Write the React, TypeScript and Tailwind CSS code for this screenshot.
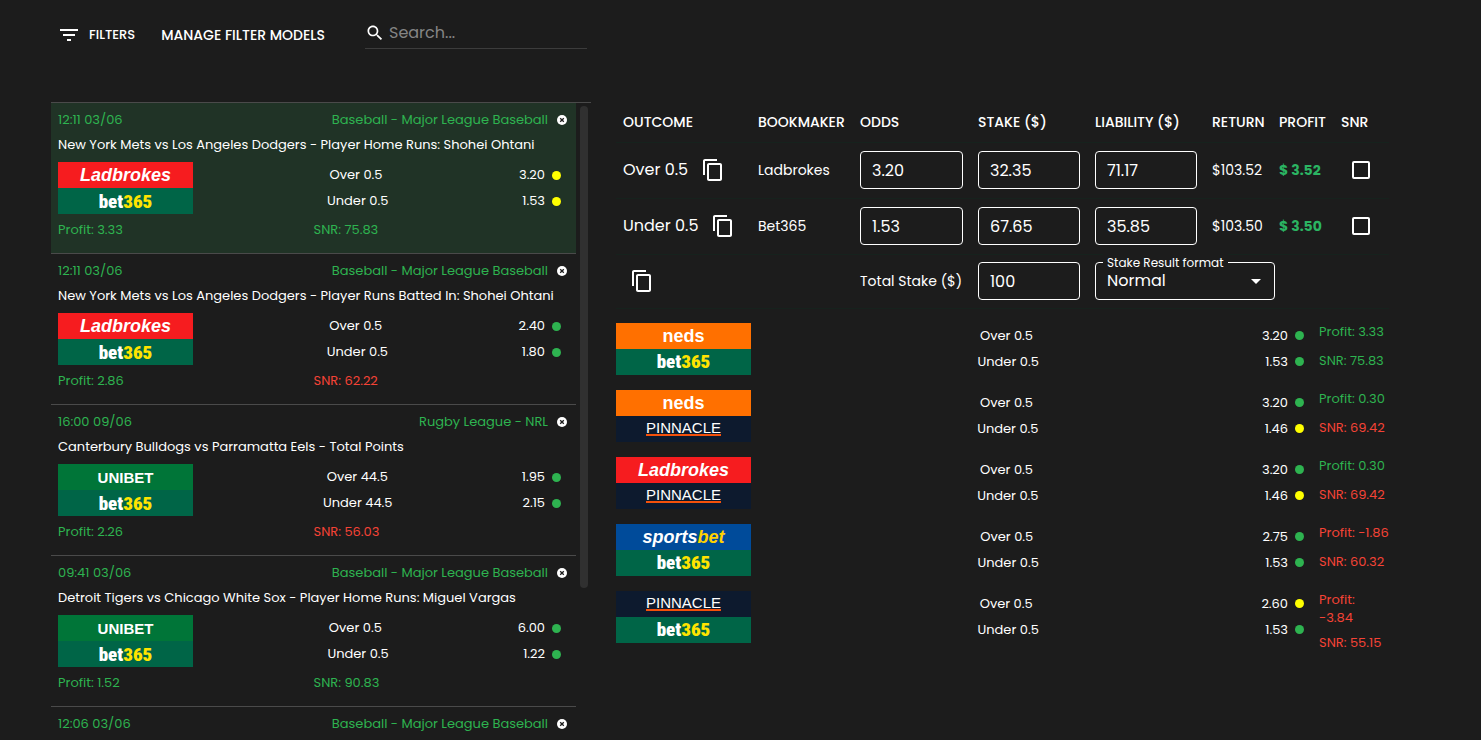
import { useState } from "react";

type Brand = "ladbrokes" | "bet365" | "unibet" | "neds" | "pinnacle" | "sportsbet";
type DotColor = "green" | "yellow";
type Leg = { brand: Brand; outcome: string; odds: string; dot: DotColor };
type Match = {
	date: string;
	league: string;
	title: string;
	legs: Leg[];
	profit: string;
	snr: string;
	snrUp: boolean;
};
type Combo = {
	legs: Leg[];
	profit: string;
	profitUp: boolean;
	snr: string;
	snrUp: boolean;
};

const leg = (brand: Brand, outcome: string, odds: string, dot: DotColor): Leg => ({
	brand,
	outcome,
	odds,
	dot,
});

const matches: Match[] = [
	{
		date: "12:11 03/06",
		league: "Baseball - Major League Baseball",
		title: "New York Mets vs Los Angeles Dodgers - Player Home Runs: Shohei Ohtani",
		legs: [leg("ladbrokes", "Over 0.5", "3.20", "yellow"), leg("bet365", "Under 0.5", "1.53", "yellow")],
		profit: "3.33",
		snr: "75.83",
		snrUp: true,
	},
	{
		date: "12:11 03/06",
		league: "Baseball - Major League Baseball",
		title: "New York Mets vs Los Angeles Dodgers - Player Runs Batted In: Shohei Ohtani",
		legs: [leg("ladbrokes", "Over 0.5", "2.40", "green"), leg("bet365", "Under 0.5", "1.80", "green")],
		profit: "2.86",
		snr: "62.22",
		snrUp: false,
	},
	{
		date: "16:00 09/06",
		league: "Rugby League - NRL",
		title: "Canterbury Bulldogs vs Parramatta Eels - Total Points",
		legs: [leg("unibet", "Over 44.5", "1.95", "green"), leg("bet365", "Under 44.5", "2.15", "green")],
		profit: "2.26",
		snr: "56.03",
		snrUp: false,
	},
	{
		date: "09:41 03/06",
		league: "Baseball - Major League Baseball",
		title: "Detroit Tigers vs Chicago White Sox - Player Home Runs: Miguel Vargas",
		legs: [leg("unibet", "Over 0.5", "6.00", "green"), leg("bet365", "Under 0.5", "1.22", "green")],
		profit: "1.52",
		snr: "90.83",
		snrUp: true,
	},
	{
		date: "12:06 03/06",
		league: "Baseball - Major League Baseball",
		title: "",
		legs: [],
		profit: "",
		snr: "",
		snrUp: true,
	},
];

const combos: Combo[] = [
	{
		legs: [leg("neds", "Over 0.5", "3.20", "green"), leg("bet365", "Under 0.5", "1.53", "green")],
		profit: "3.33",
		profitUp: true,
		snr: "75.83",
		snrUp: true,
	},
	{
		legs: [leg("neds", "Over 0.5", "3.20", "green"), leg("pinnacle", "Under 0.5", "1.46", "yellow")],
		profit: "0.30",
		profitUp: true,
		snr: "69.42",
		snrUp: false,
	},
	{
		legs: [leg("ladbrokes", "Over 0.5", "3.20", "green"), leg("pinnacle", "Under 0.5", "1.46", "yellow")],
		profit: "0.30",
		profitUp: true,
		snr: "69.42",
		snrUp: false,
	},
	{
		legs: [leg("sportsbet", "Over 0.5", "2.75", "green"), leg("bet365", "Under 0.5", "1.53", "green")],
		profit: "-1.86",
		profitUp: false,
		snr: "60.32",
		snrUp: false,
	},
	{
		legs: [leg("pinnacle", "Over 0.5", "2.60", "yellow"), leg("bet365", "Under 0.5", "1.53", "green")],
		profit: "-3.84",
		profitUp: false,
		snr: "55.15",
		snrUp: false,
	},
];

const bets = [
	{ outcome: "Over 0.5", bookmaker: "Ladbrokes", odds: "3.20", stake: "32.35", liability: "71.17", payout: "$103.52", profit: "$ 3.52" },
	{ outcome: "Under 0.5", bookmaker: "Bet365", odds: "1.53", stake: "67.65", liability: "35.85", payout: "$103.50", profit: "$ 3.50" },
];

export default function App() {
	const [selected, setSelected] = useState(0);

	return (
		<div className="flex h-screen flex-col overflow-hidden bg-[#1c1c1c] pr-[92px] pl-[51px] font-['Poppins','Inter',sans-serif] text-white">
			<Toolbar />
			<main className="grid min-h-0 flex-1 grid-cols-[540fr_773fr] gap-[25px] pt-8">
				<section className="flex min-h-0 overflow-hidden border-t border-[#4a4a4a]">
					<ul className="min-w-0 flex-1">
						{matches.map((match, i) => (
							<MatchCard
								key={i}
								match={match}
								active={i === selected}
								onSelect={() => setSelected(i)}
							/>
						))}
					</ul>
					<div className="w-[15px] pt-[3px] pl-1">
						<div className="h-[76%] w-2 rounded-full bg-[#303030]" />
					</div>
				</section>
				<section className="min-w-0">
					<Calculator />
					<ul className="flex flex-col gap-[15px] pt-[14px]">
						{combos.map((combo, i) => (
							<ComboRow key={i} combo={combo} />
						))}
					</ul>
				</section>
			</main>
		</div>
	);
}

function Toolbar() {
	return (
		<header className="flex h-[70px] shrink-0 items-center pl-[6px] font-medium">
			<button className="mr-[26px] flex items-center gap-2 text-[13px]">
				<svg className="size-6" viewBox="0 0 24 24" fill="currentColor">
					<path d="M10 18h4v-2h-4v2zM3 6v2h18V6H3zm3 7h12v-2H6v2z" />
				</svg>
				FILTERS
			</button>
			<button className="mr-10 text-sm">MANAGE FILTER MODELS</button>
			<label className="mb-[5px] flex h-[33px] w-[222px] items-center border-b border-[#3c3c3c] pt-[2px] font-normal">
				<svg className="mr-1 size-5 shrink-0" viewBox="0 0 24 24" fill="currentColor">
					<path d="M15.5 14h-.79l-.28-.27C15.41 12.59 16 11.11 16 9.5 16 5.91 13.09 3 9.5 3S3 5.91 3 9.5 5.91 16 9.5 16c1.61 0 3.09-.59 4.23-1.57l.27.28v.79l5 4.99L20.49 19l-4.99-5zm-6 0C7.01 14 5 11.99 5 9.5S7.01 5 9.5 5 14 7.01 14 9.5 11.99 14 9.5 14z" />
				</svg>
				<input
					type="text"
					aria-label="Search"
					placeholder="Search..."
					className="w-full bg-transparent text-base outline-none placeholder:text-[#858585]"
				/>
			</label>
		</header>
	);
}

type MatchCardProps = {
	match: Match;
	active: boolean;
	onSelect: () => void;
};

function MatchCard({ match, active, onSelect }: MatchCardProps) {
	return (
		<li
			onClick={onSelect}
			className={`${active ? "bg-[#203326] " : ""}cursor-pointer border-b border-[#4a4a4a] px-[7px] pt-[5px] pb-[13px] text-[13px]`}
		>
			<div className="flex h-6 items-center text-[#2eb350]">
				<span>{match.date}</span>
				<span className="ml-auto">{match.league}</span>
				<button aria-label="Remove" className="mr-[2px] ml-[9px] text-white">
					<CloseIcon />
				</button>
			</div>
			<h3 className="mb-1 h-[26px] truncate leading-[26px]">{match.title}</h3>
			<div className="pr-2">
				<Legs legs={match.legs} />
			</div>
			{match.profit && (
				<div className="grid grid-cols-2 pt-[6px] leading-5">
					<span className="text-[#2eb350]">Profit: {match.profit}</span>
					<span className={match.snrUp ? "text-[#2eb350]" : "text-[#f44336]"}>SNR: {match.snr}</span>
				</div>
			)}
		</li>
	);
}

function Legs({ legs }: { legs: Leg[] }) {
	return (
		<div>
			{legs.map((item) => (
				<div key={item.outcome} className="flex h-[26px] items-center">
					<BrandLogo brand={item.brand} />
					<span className="flex-1 text-center">{item.outcome}</span>
					<span className="mr-[7px]">{item.odds}</span>
					<span
						className={`${item.dot === "green" ? "bg-[#2eb350]" : "bg-[#ffff00]"} size-[9px] rounded-full`}
					/>
				</div>
			))}
		</div>
	);
}

function ComboRow({ combo }: { combo: Combo }) {
	return (
		<li className="flex items-start text-[13px]">
			<div className="flex-1">
				<Legs legs={combo.legs} />
			</div>
			<div className="-mb-[9px] ml-[15px] flex min-h-[47px] w-[70px] flex-col justify-between gap-[7px] leading-[18px]">
				<span className={combo.profitUp ? "text-[#2eb350]" : "text-[#f44336]"}>Profit: {combo.profit}</span>
				<span className={combo.snrUp ? "text-[#2eb350]" : "text-[#f44336]"}>SNR: {combo.snr}</span>
			</div>
		</li>
	);
}

function Calculator() {
	return (
		<table className="w-full table-fixed border-collapse text-left text-sm whitespace-nowrap">
			<colgroup>
				<col className="w-[135px]" />
				<col className="w-[102px]" />
				<col className="w-[118px]" />
				<col className="w-[117px]" />
				<col className="w-[117px]" />
				<col className="w-[67px]" />
				<col className="w-[62px]" />
				<col />
			</colgroup>
			<thead>
				<tr className="h-10 border-b border-[#16221d]">
					{["OUTCOME", "BOOKMAKER", "ODDS", "STAKE ($)", "LIABILITY ($)", "RETURN", "PROFIT", "SNR"].map(
						(name) => (
							<th key={name} className="pr-2 pl-[7px] font-medium">
								{name}
							</th>
						)
					)}
				</tr>
			</thead>
			<tbody>
				{bets.map((bet) => (
					<tr key={bet.outcome} className="h-14 border-b border-[#16221d]">
						<td className="pr-2 pl-[7px]">
							<div className="flex items-center gap-[13px] text-base">
								{bet.outcome}
								<CopyButton />
							</div>
						</td>
						<td className="pr-2 pl-[7px]">{bet.bookmaker}</td>
						<td className="pr-2 pl-[7px]">
							<NumberBox label="Odds" value={bet.odds} />
						</td>
						<td className="pr-2 pl-[7px]">
							<NumberBox label="Stake" value={bet.stake} />
						</td>
						<td className="pr-2 pl-[7px]">
							<NumberBox label="Liability" value={bet.liability} />
						</td>
						<td className="pr-2 pl-[7px]">{bet.payout}</td>
						<td className="pr-2 pl-[7px] font-bold text-[#2bb462]">{bet.profit}</td>
						<td className="pr-2 pl-[7px]">
							<input
								type="checkbox"
								aria-label="SNR"
								className="ml-[11px] block size-[18px] appearance-none rounded-xs border-2 border-white checked:bg-white"
							/>
						</td>
					</tr>
				))}
				<tr className="h-[54px] border-b border-[#16221d]">
					<td className="px-[14px]">
						<CopyButton />
					</td>
					<td />
					<td className="pr-2 pl-[7px]">
						<label htmlFor="total-stake">Total Stake ($)</label>
					</td>
					<td className="pr-2 pl-[7px]">
						<NumberBox id="total-stake" value="100" />
					</td>
					<td className="pr-2 pl-[7px]" colSpan={4}>
						<div className="relative w-[180px]">
							<select
								id="format"
								className="block h-[38px] w-full appearance-none rounded-sm border border-white bg-transparent px-[11px] text-base outline-none"
							>
								<option>Normal</option>
							</select>
							<label
								htmlFor="format"
								className="absolute -top-2 left-2 bg-[#1c1c1c] px-1 text-xs leading-[18px]"
							>
								Stake Result format
							</label>
							<svg
								className="pointer-events-none absolute top-[7px] right-[7px] size-6"
								viewBox="0 0 24 24"
								fill="currentColor"
							>
								<path d="M7 10l5 5 5-5z" />
							</svg>
						</div>
					</td>
				</tr>
			</tbody>
		</table>
	);
}

type NumberBoxProps = {
	value: string;
	id?: string;
	label?: string;
};

function NumberBox({ value, id, label }: NumberBoxProps) {
	return (
		<input
			id={id}
			aria-label={label}
			type="text"
			inputMode="decimal"
			defaultValue={value}
			className="block h-[38px] w-full rounded-sm border border-white bg-transparent px-[11px] text-base outline-none"
		/>
	);
}

function BrandLogo({ brand }: { brand: Brand }) {
	const base = "flex h-[26px] w-[135px] items-center justify-center font-['Liberation_Sans',Arial,sans-serif] leading-none";

	switch (brand) {
		case "ladbrokes":
			return <div className={`${base} bg-[#f61c1f] text-lg font-bold italic`}>Ladbrokes</div>;
		case "unibet":
			return <div className={`${base} bg-[#007538] text-[15px] font-bold`}>UNIBET</div>;
		case "neds":
			return <div className={`${base} bg-[#ff7000] text-lg font-bold`}>neds</div>;
		case "sportsbet":
			return (
				<div className={`${base} bg-[#004b9a] text-lg font-bold italic`}>
					sports<span className="text-[#ffd200]">bet</span>
				</div>
			);
		case "pinnacle":
			return (
				<div className={`${base} bg-[#0d1a2e] text-[15px]`}>
					<span className="border-b-2 border-[#f4510b] leading-[13px]">PINNACLE</span>
				</div>
			);
		default:
			return (
				<div className={`${base} bg-[#006547]`}>
					<span className="font-['Roboto_Condensed','Open_Sans_Condensed','Roboto',sans-serif] text-[19px] font-black">
						bet<span className="text-[#ffe400]">365</span>
					</span>
				</div>
			);
	}
}

function CopyButton() {
	return (
		<button aria-label="Copy" className="block">
			<svg className="size-6" viewBox="0 0 24 24" fill="currentColor">
				<path d="M16 1H4c-1.1 0-2 .9-2 2v14h2V3h12V1zm3 4H8c-1.1 0-2 .9-2 2v14c0 1.1.9 2 2 2h11c1.1 0 2-.9 2-2V7c0-1.1-.9-2-2-2zm0 16H8V7h11v14z" />
			</svg>
		</button>
	);
}

function CloseIcon() {
	return (
		<svg className="size-[10px]" viewBox="0 0 10 10">
			<circle cx="5" cy="5" r="5" fill="currentColor" />
			<path d="M3.2 3.2l3.6 3.6M6.8 3.2L3.2 6.8" stroke="#1c1c1c" strokeWidth="1.3" />
		</svg>
	);
}
